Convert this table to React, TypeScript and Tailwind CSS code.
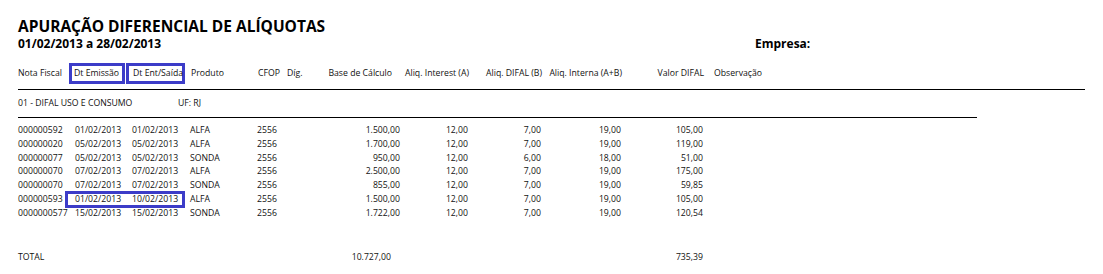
const rows = [
  ["000000592", "01/02/2013", "01/02/2013", "ALFA", "2556", "1.500,00", "12,00", "7,00", "19,00", "105,00"],
  ["000000020", "05/02/2013", "05/02/2013", "ALFA", "2556", "1.700,00", "12,00", "7,00", "19,00", "119,00"],
  ["000000077", "05/02/2013", "05/02/2013", "SONDA", "2556", "950,00", "12,00", "6,00", "18,00", "51,00"],
  ["000000070", "07/02/2013", "07/02/2013", "ALFA", "2556", "2.500,00", "12,00", "7,00", "19,00", "175,00"],
  ["000000070", "07/02/2013", "07/02/2013", "SONDA", "2556", "855,00", "12,00", "7,00", "19,00", "59,85"],
  ["000000593", "01/02/2013", "10/02/2013", "ALFA", "2556", "1.500,00", "12,00", "7,00", "19,00", "105,00"],
  ["0000000577", "15/02/2013", "15/02/2013", "SONDA", "2556", "1.722,00", "12,00", "7,00", "19,00", "120,54"],
];

function Row({ r, boxed }: { r: string[]; boxed?: boolean }) {
  return (
    <div className="relative flex pl-[18px] leading-[13.83px] whitespace-nowrap">
      <span className="w-[57px]">{r[0]}</span>
      <span className="w-[57px]">{r[1]}</span>
      <span className="w-[58px]">{r[2]}</span>
      <span className="w-[67px]">{r[3]}</span>
      <span className="w-[29px]">{r[4]}</span>
      <span className="w-[34px]"></span>
      <span className="w-[80px] text-right">{r[5]}</span>
      <span className="w-[68px] text-right">{r[6]}</span>
      <span className="w-[73px] text-right">{r[7]}</span>
      <span className="w-[80px] text-right">{r[8]}</span>
      <span className="w-[82px] text-right">{r[9]}</span>
      {boxed && (
        <div className="absolute left-[65px] top-[-2px] h-[17px] w-[120px] border-[3px] border-[#3c3cc8]" />
      )}
    </div>
  );
}

export default function App() {
  return (
    <div className="h-[274px] w-[1103px] overflow-hidden bg-white text-[8.7px] text-[#111] font-['Open_Sans','Noto_Sans',sans-serif]">
      {/* Heading */}
      <div className="pl-[18px] pt-[18px]">
        <h1 className="text-[15.5px] font-bold leading-[16px] text-black">APURAÇÃO DIFERENCIAL DE ALÍQUOTAS</h1>
        <div className="mt-[4px] flex text-[12px] font-bold leading-[12px] text-black">
          <span className="w-[737px]">01/02/2013 a 28/02/2013</span>
          <span>Empresa:</span>
        </div>
      </div>

      {/* Column headers */}
      <div className="mt-[13px] flex h-[21px] items-center pl-[18px] whitespace-nowrap">
        <span className="w-[51px]">Nota Fiscal</span>
        <span className="flex h-[21px] w-[56px] items-center border-[3px] border-[#3c3cc8] pl-[2px]">Dt Emissão</span>
        <span className="ml-[1px] flex h-[21px] w-[59px] items-center border-[3px] border-[#3c3cc8] pl-[4px]">Dt Ent/Saída</span>
        <span className="ml-[6px] w-[67px]">Produto</span>
        <span className="w-[29px]">CFOP</span>
        <span className="w-[34px]">Díg.</span>
        <span className="w-[80px] pr-[9px] text-right">Base de Cálculo</span>
        <span className="w-[68px] text-right">Aliq. Interest (A)</span>
        <span className="w-[73px] text-right">Aliq. DIFAL (B)</span>
        <span className="w-[80px] text-right">Aliq. Interna (A+B)</span>
        <span className="w-[82px] text-right">Valor DIFAL</span>
        <span className="ml-[10px]">Observação</span>
      </div>
      <div className="ml-[18px] mt-[5px] w-[1067px] border-t border-black" />

      {/* Group */}
      <div className="mt-[6px] flex pl-[18px] leading-[14px] whitespace-nowrap">
        <span className="w-[160px]">01 - DIFAL USO E CONSUMO</span>
        <span>UF: RJ</span>
      </div>
      <div className="ml-[18px] mt-[7px] w-[959px] border-t border-black" />

      {/* Rows */}
      <div className="mt-[6px]">
        {rows.map((r, i) => (
          <Row key={i} r={r} boxed={i === 5} />
        ))}
      </div>

      {/* Total */}
      <div className="mt-[29px] flex pl-[18px] leading-[14px] whitespace-nowrap">
        <span className="w-[293px]">TOTAL</span>
        <span className="w-[80px] text-right">10.727,00</span>
        <span className="w-[312px] text-right">735,39</span>
      </div>
    </div>
  );
}
